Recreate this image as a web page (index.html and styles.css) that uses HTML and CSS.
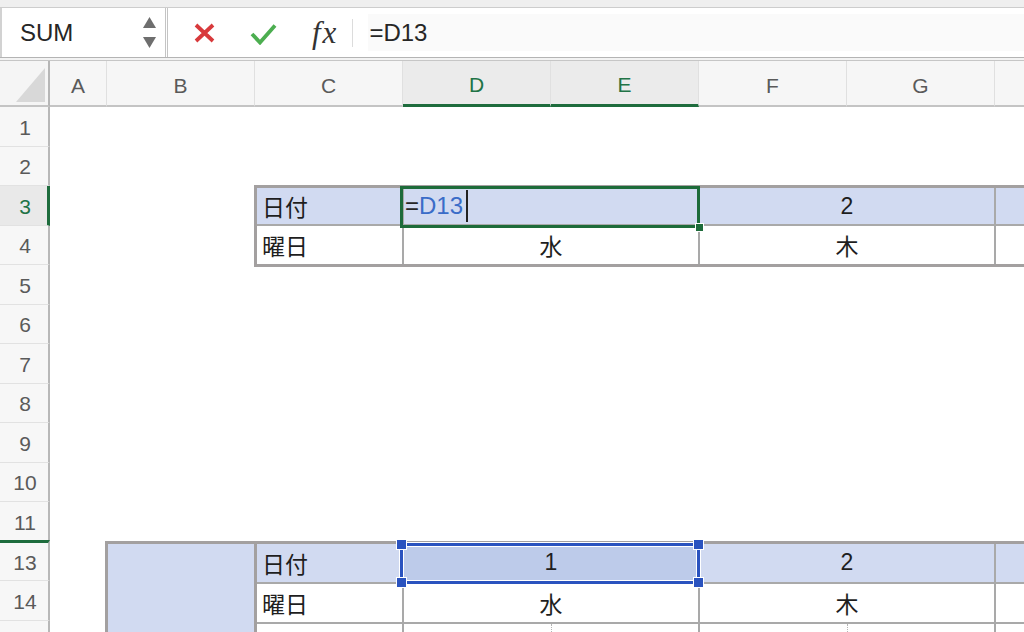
FILE: index.html
```html
<!DOCTYPE html>
<html lang="ja">
<head>
<meta charset="utf-8">
<title>Sheet</title>
<link rel="stylesheet" href="styles.css">
</head>
<body>
<div class="app">
  <div class="topstrip"></div>
  <div class="fbar">
    <div class="namebox">
      <span class="name">SUM</span>
      <div class="spin">
        <svg width="13" height="11" viewBox="0 0 13 11"><polygon points="6.5,0 13,11 0,11"/></svg>
        <svg width="13" height="11" viewBox="0 0 13 11"><polygon points="0,0 13,0 6.5,11"/></svg>
      </div>
    </div>
    <div class="fzone">
      <svg class="ico-x" width="23" height="22" viewBox="0 0 23 22"><path d="M3 3 L20 19 M20 3 L3 19"/></svg>
      <svg class="ico-ok" width="27" height="22" viewBox="0 0 27 22"><polyline points="2,11 10,19.5 25,2.5"/></svg>
      <span class="fx">fx</span>
      <div class="fsep"></div>
      <div class="finput">=D13</div>
    </div>
  </div>
  <div class="rule"></div>
  <div class="sheet">
    <div class="corner"><svg width="29" height="34" viewBox="0 0 29 34"><polygon points="29,0 29,34 0,34"/></svg></div>
    <div class="ch">A</div>
    <div class="ch">B</div>
    <div class="ch">C</div>
    <div class="ch sel">D</div>
    <div class="ch sel">E</div>
    <div class="ch">F</div>
    <div class="ch">G</div>
    <div class="ch last"></div>

    <div class="rh">1</div>
    <div class="rh">2</div>
    <div class="rh sel">3</div>
    <div class="rh">4</div>
    <div class="rh">5</div>
    <div class="rh">6</div>
    <div class="rh">7</div>
    <div class="rh">8</div>
    <div class="rh">9</div>
    <div class="rh">10</div>
    <div class="rh">11</div>
    <div class="rh after-hidden">13</div>
    <div class="rh">14</div>
    <div class="rh"></div>

    <div class="tbl t1">
      <div class="c l blue">日付</div>
      <div class="c s2 blue edit">
        <span class="eq">=</span><span class="ref">D13</span><span class="caret"></span>
        <div class="gsel"><div class="handle"></div></div>
      </div>
      <div class="c s2 blue">2</div>
      <div class="c h blue"></div>
      <div class="c l nb">曜日</div>
      <div class="c s2 nb">水</div>
      <div class="c s2 nb">木</div>
      <div class="c h nb"></div>
    </div>

    <div class="tbl t2">
      <div class="c bcol blue"></div>
      <div class="c l blue">日付</div>
      <div class="c s2 picked">1
        <div class="bsel">
          <div class="bh tl"></div><div class="bh tr"></div><div class="bh bl"></div><div class="bh br"></div>
        </div>
      </div>
      <div class="c s2 blue">2</div>
      <div class="c h blue"></div>
      <div class="c l">曜日</div>
      <div class="c s2">水</div>
      <div class="c s2">木</div>
      <div class="c h"></div>
      <div class="c nb"></div>
      <div class="c nb dot"></div>
      <div class="c nb"></div>
      <div class="c nb dot"></div>
      <div class="c nb"></div>
      <div class="c h nb"></div>
    </div>
  </div>
</div>
</body>
</html>
```
FILE: styles.css
```css
* { box-sizing: border-box; margin: 0; padding: 0; }
html, body { width: 1024px; height: 632px; overflow: hidden; background: #fff; }
body { font-family: "Liberation Sans", "Noto Sans CJK JP", sans-serif; color: #222; }

.topstrip { height: 8px; background: #efefef; border-bottom: 1px solid #cdcdcd; }

.fbar { height: 50px; display: flex; background: #fff; border-bottom: 1px solid #b4b4b4; }
.namebox {
  width: 168px; display: flex; align-items: center;
  padding-left: 18px; padding-right: 9px;
  border-left: 2px solid #d2d2d2; border-right: 3px double #c4c4c4;
}
.name { font-size: 24px; color: #262626; }
.spin { margin-left: auto; display: flex; flex-direction: column; gap: 9px; }
.spin svg { display: block; fill: #6e6e6e; }

.fzone { flex: 1; display: flex; align-items: center; padding-left: 25px; }
.ico-x path { fill: none; stroke: #d83a3c; stroke-width: 3.8; }
.ico-ok { margin-left: 34px; margin-top: 2px; }
.ico-ok polyline { fill: none; stroke: #4cae50; stroke-width: 3.8; }
.fx {
  margin-left: 35px; font-family: "Liberation Serif", serif; font-style: italic;
  font-size: 31px; color: #333; letter-spacing: 2px; line-height: 1;
}
.fsep { width: 1px; height: 28px; background: #dcdcdc; margin-left: 14px; }
.finput {
  flex: 1; height: 37px; margin-left: 15px; background: #fafafa;
  display: flex; align-items: center; padding-left: 1px;
  font-size: 24px; color: #262626;
}

.rule { height: 3px; background: #f3f3f3; border-bottom: 1px solid #c6c6c6; }

.sheet {
  display: grid;
  grid-template-columns: 50px 57px repeat(6, 148px) 1fr;
  grid-template-rows: 46px repeat(14, 39.5px);
}

.corner {
  background: #f5f5f5; border-right: 2px solid #b6b6b6; border-bottom: 2px solid #c4c4c4;
  display: flex; align-items: flex-end; justify-content: flex-end; padding: 0 3px 3px 0;
}
.corner svg { display: block; fill: #d8d8d8; }

.ch {
  background: #f6f6f6; border-right: 1px solid #e0e0e0; border-bottom: 2px solid #c4c4c4;
  display: flex; align-items: center; justify-content: center; padding-top: 5px;
  font-size: 21px; color: #5a5a5a;
}
.ch.sel { background: #ebebeb; color: #217346; border-bottom: 3px solid #1e6c3d; }
.ch.last { border-right: 0; }

.rh {
  grid-column: 1;
  background: #f7f7f7; border-right: 2px solid #b8b8b8; border-bottom: 1px solid #e2e2e2;
  display: flex; align-items: center; justify-content: center; padding: 3px 0 0 2px;
  font-size: 21px; color: #5a5a5a;
}
.rh.sel { background: #e9e9e9; color: #217346; border-right: 3px solid #1e6c3d; padding-left: 3px; }
.rh.after-hidden { border-top: 3px solid #1e6c3d; margin-top: -2px; }

.tbl { display: grid; border: 3px solid #a3a0a0; border-right: 0; }
.t1 {
  grid-column: 4 / 10; grid-row: 4 / 6; margin: -1px 0 -2px -1px;
  grid-template-columns: 147px repeat(4, 148px) 1fr;
  grid-template-rows: 1fr 1fr;
}
.t2 {
  grid-column: 3 / 10; grid-row: 13 / 16; margin: -1px 0 0 -2px; border-bottom: 0;
  grid-template-columns: 149px 147px repeat(4, 148px) 1fr;
  grid-template-rows: 40px 40px 1fr;
}

.c {
  border-right: 2px solid #a9a9a9; border-bottom: 2px solid #a9a9a9;
  display: flex; align-items: center; justify-content: center;
  font-size: 23px; color: #1e1e1e; background: #fff;
}
.c.l { justify-content: flex-start; padding-left: 5px; }
.c.blue { background: #d1daf1; }
.c.s2 { grid-column: span 2; }
.c.h { border-right: 0; }
.c.nb { border-bottom: 0; }
.c.dot { border-right: 1px dotted #b5b5b5; }
.c.bcol { grid-row: span 3; border-right: 3px solid #a3a0a0; border-bottom: 0; }

.c.edit { position: relative; justify-content: flex-start; padding-left: 1px; font-size: 24px; }
.eq { color: #262626; }
.ref { color: #3a6cc8; }
.caret { display: inline-block; width: 2px; height: 32px; background: #222; margin-left: 3px; }
.gsel {
  position: absolute; left: -4px; top: -2px; right: -2px; bottom: -4px;
  border: 3px solid #1d6b3a;
}
.handle {
  position: absolute; right: -7px; bottom: -7px; width: 9px; height: 9px;
  background: #1d6b3a; border: 1px solid #fff;
}

.c.picked { position: relative; background: #bdcbea; }
.bsel {
  position: absolute; left: -4px; top: -1px; right: -2px; bottom: -2px;
  border: 3px solid #2a53bf;
  box-shadow: inset 0 0 0 1px #fff, 0 0 0 1px #fff;
}
.bh {
  position: absolute; width: 11px; height: 11px; background: #2a53bf; border: 1px solid #fff;
}
.bh.tl { left: -7px; top: -7px; }
.bh.tr { right: -7px; top: -7px; }
.bh.bl { left: -7px; bottom: -7px; }
.bh.br { right: -7px; bottom: -7px; }
```
